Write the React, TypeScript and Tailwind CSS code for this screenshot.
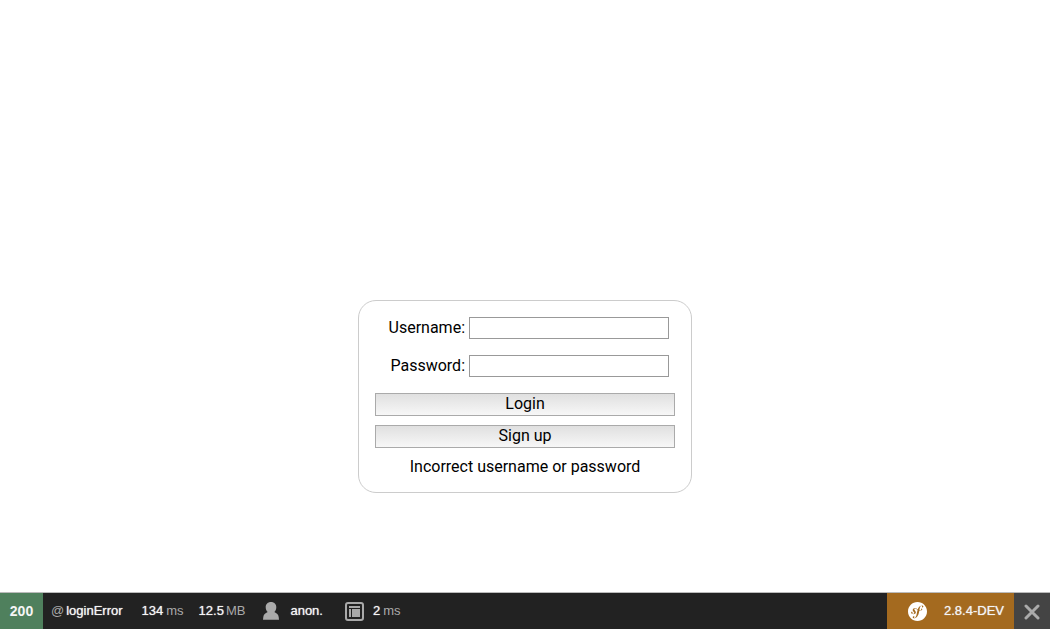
import React from "react";
import { SiSymfony } from "react-icons/si";

function Field({ id, label, type }: { id: string; label: string; type: string }) {
  return (
    <div className="mb-4 flex h-[22px] items-center justify-end gap-1 pr-1.5">
      <label htmlFor={id}>{label}</label>
      <input
        id={id}
        name={id}
        type={type}
        className="h-[22px] w-[200px] border border-[#999] bg-white px-1 outline-none"
      />
    </div>
  );
}

function FormButton({ children, type }: { children: React.ReactNode; type: "submit" | "button" }) {
  return (
    <button
      type={type}
      className="flex h-[23px] w-full items-center justify-center border border-[#aaa] bg-linear-to-b from-[#e0e0e0] to-[#f7f7f7] pb-0.5"
    >
      {children}
    </button>
  );
}

function UserIcon() {
  return (
    <svg width="16" height="18" viewBox="0 0 16 18" fill="#aaa" aria-hidden="true">
      <path d="M8 0C4.800 0 2.700 2.200 2.700 5.200c0 2 .8 3.700 2 4.900C2.200 11.200 0.600 12.600 0.300 15L0 17.800h16L15.700 15c-.3-2.400-1.900-3.800-4.400-4.900 1.200-1.200 2-2.900 2-4.900C13.300 2.200 11.200 0 8 0z" />
    </svg>
  );
}

function TemplateIcon() {
  return (
    <svg width="19" height="19" viewBox="0 0 19 19" aria-hidden="true">
      <rect x="1" y="1" width="17" height="17" rx="2" fill="#222" stroke="#aaa" strokeWidth="2" />
      <path fill="#aaa" d="M4 4h11v2H4zM4 7h2v8H4zM7 7h8v8H7z" />
    </svg>
  );
}

function CloseIcon() {
  return (
    <svg width="16" height="16" viewBox="0 0 16 16" aria-hidden="true">
      <path d="M2 2l12 12M14 2l-12 12" fill="none" stroke="#aaa" strokeWidth="3" strokeLinecap="round" />
    </svg>
  );
}

function Toolbar() {
  return (
    <footer className="flex h-[37px] items-stretch border-t border-[#bbb] bg-[#222] font-['Liberation_Sans',Arial,sans-serif] text-[13px] leading-4 text-[#f5f5f5] [text-shadow:0_0_1px_#ddd]">
      <a href="#status" className="flex w-[43px] items-center justify-center bg-[#4f805d] text-sm font-bold [text-shadow:none]">
        200
      </a>
      <a href="#route" className="flex items-center gap-0.5 px-2">
        <span className="text-[#aaa] [text-shadow:none]">@</span>
        <span>loginError</span>
      </a>
      <a href="#time" className="ml-[11px] flex items-center gap-[3px]">
        <span>134</span>
        <span className="text-[#aaa] [text-shadow:none]">ms</span>
      </a>
      <a href="#memory" className="ml-[15px] flex items-center gap-0.5">
        <span>12.5</span>
        <span className="text-[#aaa] [text-shadow:none]">MB</span>
      </a>
      <a href="#security" className="ml-[18px] flex items-center gap-[11px]">
        <UserIcon />
        <span>anon.</span>
      </a>
      <a href="#templates" className="ml-[22px] flex items-center gap-[9px]">
        <TemplateIcon />
        <span className="flex gap-[3px]">
          <span>2</span>
          <span className="text-[#aaa] [text-shadow:none]">ms</span>
        </span>
      </a>
      <a href="#config" className="ml-auto flex w-[127px] items-center justify-end gap-[17px] bg-[#a46a1f] pr-2.5">
        <SiSymfony className="size-[19px] text-white" aria-hidden="true" />
        <span>2.8.4-DEV</span>
      </a>
      <button type="button" aria-label="Close toolbar" className="flex w-9 items-center justify-center bg-[#444] pt-0.5">
        <CloseIcon />
      </button>
    </footer>
  );
}

export default function App() {
  return (
    <div className="flex min-h-screen flex-col bg-white font-[Roboto,sans-serif] text-base leading-5 text-black">
      <main className="flex flex-1 items-start justify-center pt-[300px]">
        <form
          className="w-[334px] rounded-[18px] border border-[#ccc] px-4 pt-4 pb-[15px]"
          onSubmit={(event) => event.preventDefault()}
        >
          <Field id="username" label="Username:" type="text" />
          <Field id="password" label="Password:" type="password" />
          <div className="flex flex-col gap-[9px]">
            <FormButton type="submit">Login</FormButton>
            <FormButton type="button">Sign up</FormButton>
            <p className="text-center" role="alert">
              Incorrect username or password
            </p>
          </div>
        </form>
      </main>
      <Toolbar />
    </div>
  );
}
